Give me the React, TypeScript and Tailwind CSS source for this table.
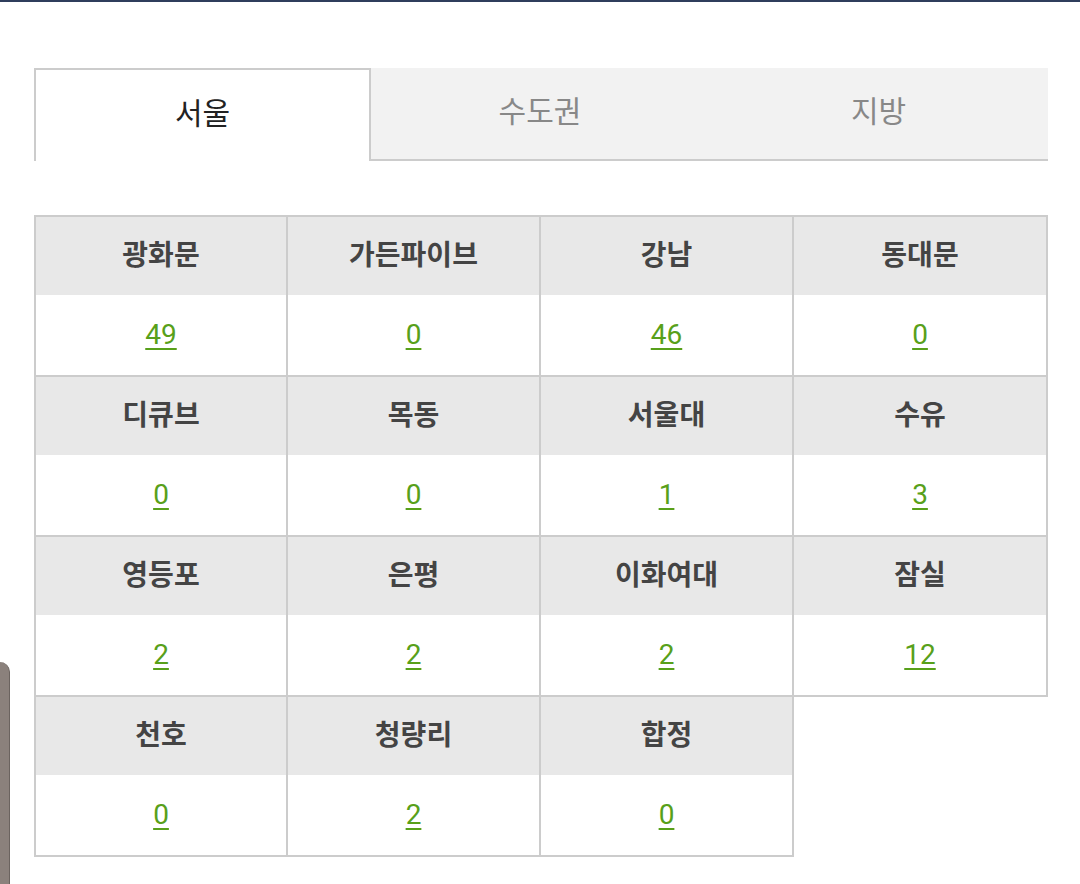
import React from "react";

const cells: { name: string; count: number }[] = [
  { name: "광화문", count: 49 },
  { name: "가든파이브", count: 0 },
  { name: "강남", count: 46 },
  { name: "동대문", count: 0 },
  { name: "디큐브", count: 0 },
  { name: "목동", count: 0 },
  { name: "서울대", count: 1 },
  { name: "수유", count: 3 },
  { name: "영등포", count: 2 },
  { name: "은평", count: 2 },
  { name: "이화여대", count: 2 },
  { name: "잠실", count: 12 },
  { name: "천호", count: 0 },
  { name: "청량리", count: 2 },
  { name: "합정", count: 0 },
];

export default function App() {
  return (
    <div
      className="relative min-h-[884px] bg-white"
      style={{ fontFamily: 'Roboto, "Noto Sans CJK KR", sans-serif' }}
    >
      <div className="h-[2px] bg-[#2f3d5c]" />

      <div className="pl-[34px] pt-[66px]">
        {/* tabs */}
        <div className="flex w-[1014px]">
          <div className="flex h-[93px] w-[337px] items-center justify-center border-2 border-b-0 border-[#cccccc] bg-white pb-1 text-[30px] text-[#222]">
            서울
          </div>
          <div className="flex h-[93px] w-[338px] items-center justify-center border-b-2 border-[#cccccc] bg-[#f2f2f2] pb-1 text-[30px] text-[#888]">
            수도권
          </div>
          <div className="flex h-[93px] w-[339px] items-center justify-center border-b-2 border-[#cccccc] bg-[#f2f2f2] pb-1 text-[30px] text-[#888]">
            지방
          </div>
        </div>

        {/* branch table */}
        <div className="mt-[54px] grid w-[1014px] grid-cols-[254px_253px_253px_254px]">
          {cells.map((c, i) => (
            <div
              key={c.name}
              className={
                "border-r-2 border-b-2 border-[#cccccc] " +
                (i % 4 === 0 ? "border-l-2 " : "") +
                (i < 4 ? "border-t-2" : "")
              }
            >
              <div className="flex h-[78px] items-center justify-center bg-[#e8e8e8] text-[28px] font-bold text-[#444]">
                {c.name}
              </div>
              <div className="flex h-[80px] items-center justify-center bg-white">
                <a className="cursor-pointer text-[28px] text-[#58a01a] underline decoration-2 underline-offset-4">
                  {c.count}
                </a>
              </div>
            </div>
          ))}
        </div>
      </div>

      <div className="absolute left-0 top-[662px] h-[222px] w-[10px] rounded-tr-[10px] border-r border-[#6b635f] bg-[#8b817c]" />
    </div>
  );
}
